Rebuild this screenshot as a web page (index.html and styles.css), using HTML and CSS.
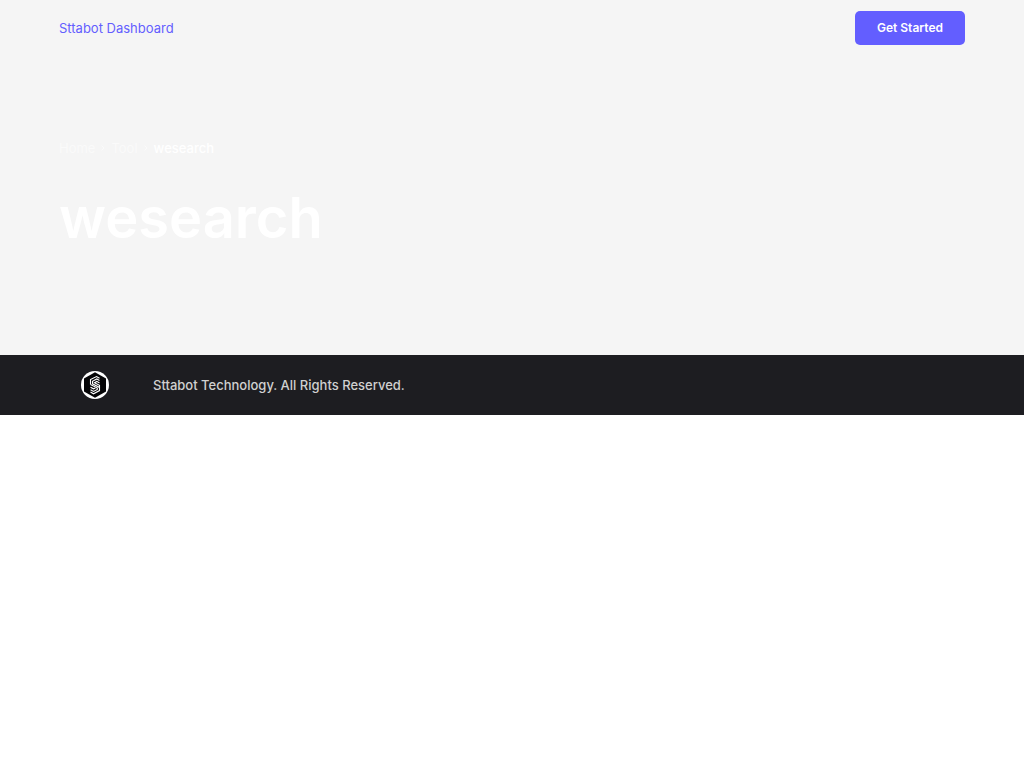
FILE: index.html
```
<!DOCTYPE html>
<html lang="en">
<head>
  <meta charset="UTF-8" />
  <meta name="viewport" content="width=device-width, initial-scale=1.0" />
  <title>wesearch - Sttabot</title>
  <link rel="stylesheet" href="styles.css">
</head>
<body>
  <!-- Header -->
  <header class="navbar">
    <a class="brand" href="#">Sttabot Dashboard</a>
    <button class="start-btn" type="button">Get Started</button>
  </header>

  <!-- Hero -->
  <main class="hero">
    <nav class="breadcrumb" aria-label="Breadcrumb">
      <a href="#">Home</a>
      <svg class="chevron" viewBox="0 0 6 10" aria-hidden="true"><path d="M1.5 2.5 4 5 1.5 7.5" /></svg>
      <a href="#">Tool</a>
      <svg class="chevron" viewBox="0 0 6 10" aria-hidden="true"><path d="M1.5 2.5 4 5 1.5 7.5" /></svg>
      <span class="current">wesearch</span>
    </nav>
    <h1>wesearch</h1>
  </main>

  <!-- Footer -->
  <footer class="footer">
    <svg class="logo" viewBox="0 0 28 28" aria-label="Sttabot">
      <circle cx="14" cy="14" r="14" fill="#fff" />
      <path d="M14 1.2 25 7.4V20.6L14 26.8 3 20.6V7.4Z" fill="#050507" />
      <g fill="none" stroke="#fff" stroke-width="1.1">
        <path d="M9.5 13.5V8.5L15.5 5.5 18.5 7.2" />
        <path d="M18.5 9.5 15.8 8 11.5 10.3V12.8L18.5 16.4V19.6L12.5 22.8 9.5 21" />
        <path d="M18.5 12 15.8 10.4 13.5 11.7 18.5 14.3V16.4" />
        <path d="M9.5 13.5 16.3 17V18.4L12.5 20.4 9.5 18.7" />
        <path d="M9.5 16.2 12.5 17.8 14.4 16.9" />
      </g>
    </svg>
    <p>Sttabot Technology. All Rights Reserved.</p>
  </footer>
</body>
</html>
```

FILE: styles.css
```
* {
  box-sizing: border-box;
}

body {
  margin: 0;
  background-color: #fff;
  font-family: Inter, sans-serif;
}

a {
  color: inherit;
  text-decoration: none;
}

/* Header */
.navbar {
  display: flex;
  justify-content: space-between;
  align-items: center;
  padding: 11px 59px;
  background-color: #f5f5f5;
}

.brand {
  color: #635eff;
  font-size: 13px;
  line-height: 20px;
}

.start-btn {
  padding: 7px 22px;
  background-color: #635eff;
  color: #fff;
  border: none;
  border-radius: 5px;
  font-family: inherit;
  font-size: 12px;
  font-weight: 600;
  line-height: 20px;
  cursor: pointer;
}

/* Hero */
.hero {
  padding: 82px 59px 101px;
  background-color: #f5f5f5;
  color: #fff;
}

.breadcrumb {
  display: flex;
  align-items: center;
  gap: 5px;
  font-size: 13px;
  line-height: 20px;
}

.breadcrumb a {
  color: #fafafa;
}

.breadcrumb .current {
  font-weight: 500;
}

.chevron {
  width: 6px;
  height: 10px;
  fill: none;
  stroke: #fafafa;
}

.hero h1 {
  margin: 24px 0 0;
  font-size: 56px;
  font-weight: 600;
  line-height: 72px;
}

/* Footer */
.footer {
  display: flex;
  align-items: center;
  gap: 44px;
  padding: 16px 81px;
  background-color: #1d1d21;
}

.logo {
  width: 28px;
  height: 28px;
}

.footer p {
  margin: 0;
  color: #d0d0d0;
  font-size: 13px;
  font-weight: 500;
  line-height: 28px;
}
```
